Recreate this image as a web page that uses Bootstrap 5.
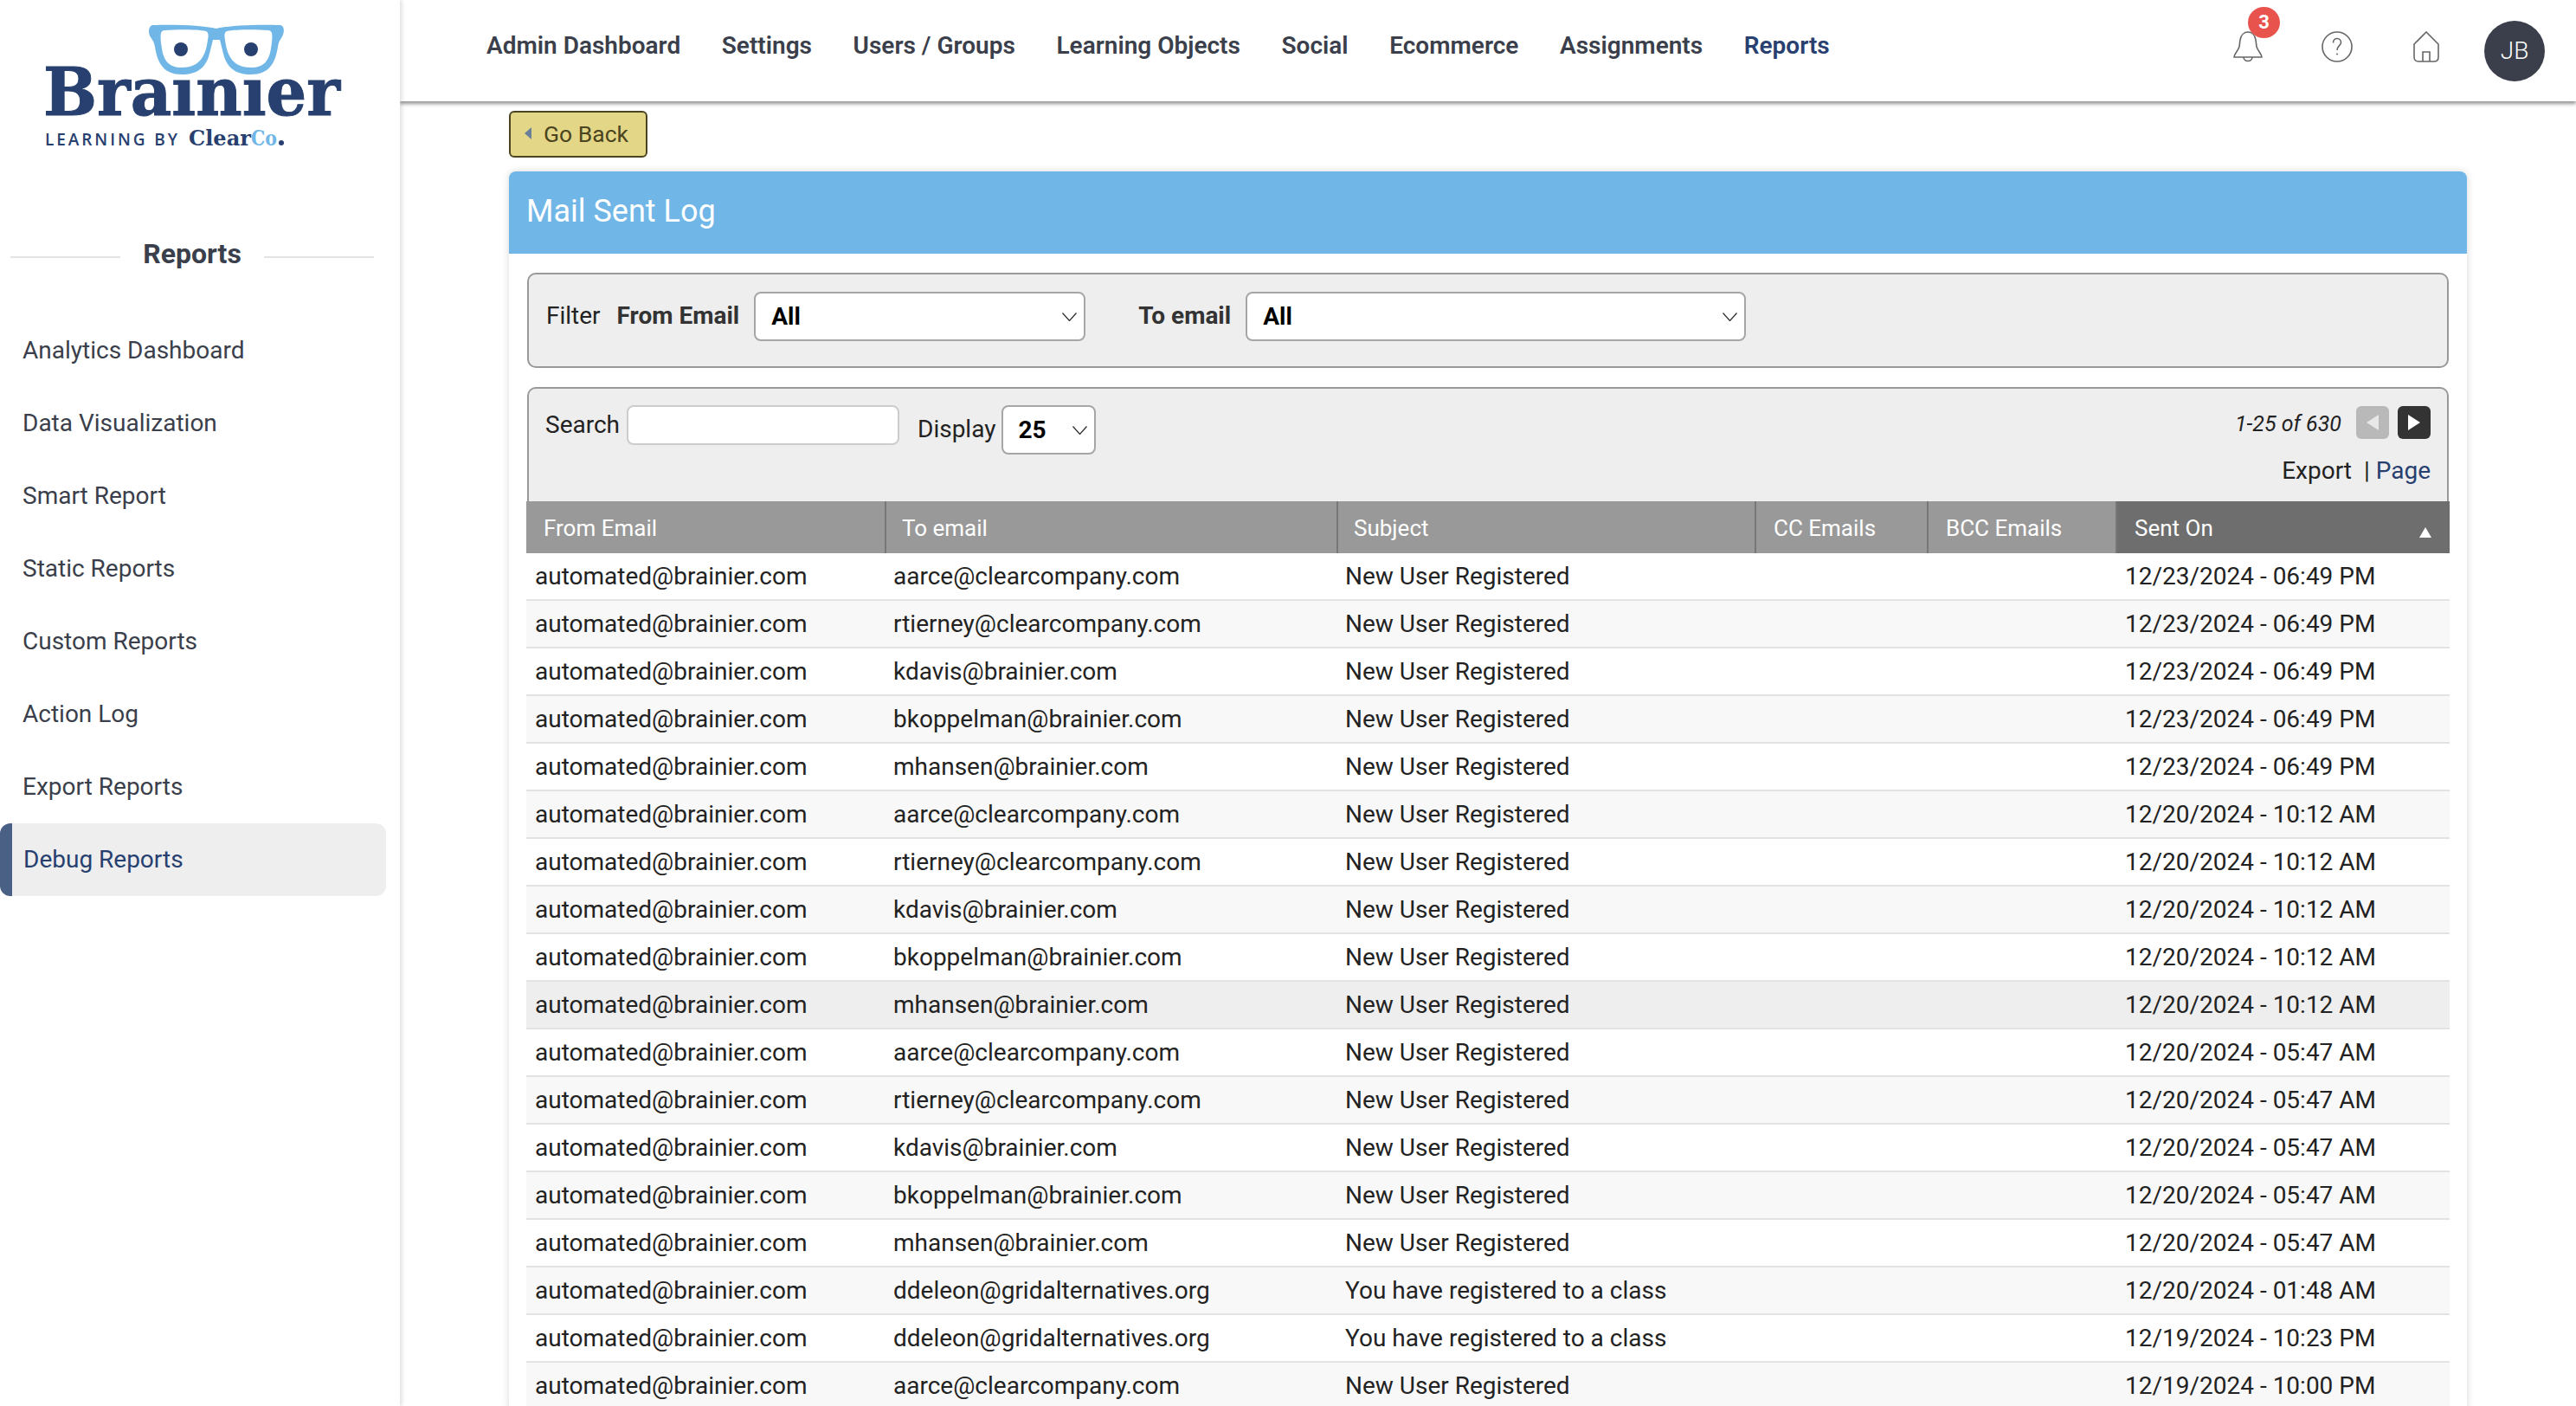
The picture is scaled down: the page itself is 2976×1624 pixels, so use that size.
<!DOCTYPE html>
<html lang="en">
<head>
<meta charset="utf-8">
<title>Mail Sent Log</title>
<link rel="stylesheet" href="https://cdn.jsdelivr.net/npm/bootstrap@5.3.0/dist/css/bootstrap.min.css">
<script src="https://cdn.jsdelivr.net/npm/bootstrap@5.3.0/dist/js/bootstrap.bundle.min.js"></script>
<style>
html,body{height:100%;overflow:hidden;background:#fff;}
body{font-family:Roboto,"Liberation Sans",sans-serif;font-size:28px;color:#222;}
main{min-width:0;}
.page-wrap{height:1624px;}
.side-rail{width:462px;flex:none;background:#fff;box-shadow:2px 0 5px rgba(0,0,0,.14);position:relative;z-index:3;}
.logo-svg{display:block;width:462px;height:200px;}
.rail-title{margin-top:62px;padding:0 30px 0 12px;gap:26px;height:62px;}
.rail-title span{font-size:32px;font-weight:700;color:#3a3f4b;line-height:62px;}
.rail-title i{flex:1;height:2px;background:#e3e3e3;margin-top:8px;}
.rail-menu{margin-top:39px;}
.rail-menu a{display:block;height:84px;line-height:84px;padding-left:26px;color:#3a3f4b;font-size:28px;text-decoration:none;width:446px;}
.rail-menu a.on{background:#eee;color:#27406f;border-left:14px solid #4a6085;padding-left:13px;border-radius:12px;}
.top-bar{height:117px;background:#fff;box-shadow:0 3px 4px rgba(0,0,0,.42);padding-left:100px;padding-right:36px;position:relative;z-index:2;}
.top-links{gap:47.6px;margin-top:-11px;}
.top-links a{color:#3a3f4b;font-size:28px;font-weight:600;text-decoration:none;white-space:nowrap;}
.top-links a.on{color:#27406f;}
.top-tools{position:relative;height:117px;}
.tool-w1{width:102px;}.tool-w2{width:106px;}.tool-w3{width:82px;}
.tool-ico{display:block;margin-top:36px;}
.tool-badge{position:absolute;left:17px;top:8px;width:37px;height:36px;border-radius:50%;background:#e9534d;color:#fff;font-size:22px;font-weight:700;line-height:36px;text-align:center;}
.tool-avatar{width:70px;height:70px;border-radius:50%;background:#3a3f4b;color:#fff;font-size:28px;font-weight:300;line-height:70px;text-align:center;}
.content-pad{padding:11px 126px 0 126px;}
.back-btn{background:#e4d687;border:2px solid #4a4420;border-radius:6px;color:#4a4420;font-size:26.5px;height:54px;width:160px;padding:0 4px 0 0;display:flex;align-items:center;justify-content:center;gap:14px;}
.back-btn:hover{background:#e4d687;color:#4a4420;border-color:#4a4420;}
.back-btn svg{display:block;margin-top:-3px;}
.log-card{margin-top:16px;border:0;border-radius:8px 8px 0 0;box-shadow:0 0 8px rgba(0,0,0,.16);}
.log-head{background:#70b6e7;color:#fff;font-size:36px;height:95px;line-height:92px;padding:0 20px;border:0;border-radius:8px 8px 0 0!important;}
.log-body{padding:22px 21px 0;}
.grey-box{background:#eee;border:2px solid #999;border-radius:10px;}
.filter-box{height:110px;padding:20px 20px 0 20px;align-items:flex-start;}
.fld-label{font-size:28px;line-height:56px;white-space:nowrap;}
.fld-strong{font-weight:700;color:#333;}
.filter-gap{margin-right:19px;}
.to-gap{margin-left:61px;}
.search-line{line-height:46px;}
.display-gap{margin-left:21px;}
.pick{flex:none;height:57px;border:2px solid #a6a6a6;border-radius:8px;font-size:28px;font-weight:700;color:#000;padding:0 0 0 18px;background-image:url("data:image/svg+xml,%3csvg xmlns='http://www.w3.org/2000/svg' viewBox='0 0 17 10'%3e%3cpath fill='none' stroke='%23333' stroke-width='1.3' d='M.5.5l8 9 8-9'/%3e%3c/svg%3e");background-size:17px 10px;background-position:right 8px center;}
.pick-from{width:383px;margin-left:17px;}
.pick-to{width:578px;margin-left:17px;}
.search-box{margin-top:22px;height:132px;padding:19px 19px 0 19px;border-bottom:0;border-radius:10px 10px 0 0;position:relative;}
.search-input{width:315px;height:46px;border:2px solid #ccc;border-radius:8px;background:#fff;margin-left:8px;padding:0 10px;}
.pick-num{width:109px;margin-left:7px;padding-left:17px;}
.pager-col{margin-left:auto;margin-top:-1px;text-align:right;}
.pager-info{font-style:italic;font-size:25px;margin-right:17px;padding-top:4px;}
.pg-btn{width:38px;height:38px;border-radius:6px;display:flex;align-items:center;justify-content:center;}
.pg-off{background:#b9b9b9;margin-right:10px;}
.pg-on{background:#333;}
.pager-links{margin-top:15px;font-size:28px;line-height:40px;}
.pager-links a{color:#27406f;text-decoration:none;}
.mail-tbl.table{width:2222px;margin:0 0 0 -1px;table-layout:fixed;border-collapse:separate;border-spacing:0;max-width:none;}
.mail-tbl.table th{background:#999;color:#fff;font-weight:400;font-size:26px;height:60px;padding:2px 0 0 18px;vertical-align:middle;border:0;border-left:2px solid #777;box-shadow:none;position:relative;}
.mail-tbl.table th:first-child{border-left:0;padding-left:20px;}
.mail-tbl.table th:nth-child(4),.mail-tbl.table th:nth-child(5){padding-left:20px;}
.mail-tbl.table th.sorted{background:#6e6e6e;padding-left:20px;}
.sort-mark{position:absolute;right:21px;top:30px;width:0;height:0;border-left:7px solid transparent;border-right:7px solid transparent;border-bottom:12px solid #fff;}
.mail-tbl.table td{height:55px;padding:1px 0 0 10px;font-size:28px;line-height:36px;color:#222;vertical-align:middle;background:#fff;border:0;border-bottom:2px solid #e3e3e3;box-shadow:none;white-space:nowrap;overflow:hidden;}
.mail-tbl.table td:last-child{padding-left:11px;}
.mail-tbl.table tbody tr:nth-child(even) td{background:#f8f8f8;}
.mail-tbl.table tbody tr.row-hover td{background:#eee;}
.col-a{width:414px;}.col-b{width:522px;}.col-c{width:483px;}.col-d{width:199px;}.col-e{width:218px;}.col-f{width:386px;}
</style>
</head>
<body>
<div class="page-wrap d-flex">
  <aside class="side-rail">
    <svg class="logo-svg" viewBox="0 0 462 200" xmlns="http://www.w3.org/2000/svg" role="img" aria-label="Brainier learning by ClearCo">
      <path fill="#70b6e7" fill-rule="evenodd" d="M176 29C200 28 235 29 250 33C265 29 300 28 324 29C329 30 329 38 325 44C322 48 322 50 321 54C318 74 310 86 290 86C272 86 262 78 258 62L254 46L246 46L242 62C238 78 228 86 210 86C190 86 182 74 179 54C178 48 176 46 174 43C171 38 171 31 176 29ZM190 35C205 34 228 34 238 36C241 37 241 42 240 46C238 60 234 78 210 78C195 78 189 70 187 56C186 50 185 42 186 38C187 36 188 35 190 35ZM310 35C295 34 272 34 262 36C259 37 259 42 260 46C262 60 266 78 290 78C305 78 311 70 313 56C314 50 315 42 314 38C313 36 312 35 310 35Z"/>
      <circle cx="209" cy="57" r="8" fill="#27406f"/>
      <circle cx="290" cy="57" r="8" fill="#27406f"/>
      <text x="50" y="133" font-family="'DejaVu Serif',serif" font-weight="700" font-size="76" fill="#27406f" stroke="#27406f" stroke-width="1" textLength="343" lengthAdjust="spacingAndGlyphs">Braınıer</text>
      <text x="52" y="168" font-family="'Open Sans',sans-serif" font-weight="600" font-size="19" fill="#27406f" textLength="153">LEARNING BY</text>
      <text x="218" y="168" font-family="'DejaVu Serif',serif" font-weight="700" font-size="25" fill="#27406f" textLength="72" lengthAdjust="spacingAndGlyphs">Clear</text>
      <text x="290" y="168" font-family="'DejaVu Serif',serif" font-weight="700" font-size="25" fill="#70b6e7" textLength="30" lengthAdjust="spacingAndGlyphs">Co</text>
      <circle cx="325" cy="165" r="3" fill="#27406f"/>
    </svg>
    <div class="rail-title d-flex align-items-center"><i></i><span>Reports</span><i></i></div>
    <nav class="rail-menu">
      <a href="#">Analytics Dashboard</a>
      <a href="#">Data Visualization</a>
      <a href="#">Smart Report</a>
      <a href="#">Static Reports</a>
      <a href="#">Custom Reports</a>
      <a href="#">Action Log</a>
      <a href="#">Export Reports</a>
      <a href="#" class="on">Debug Reports</a>
    </nav>
  </aside>
  <main class="flex-grow-1 d-flex flex-column">
    <header class="top-bar d-flex align-items-center justify-content-between">
      <nav class="top-links d-flex">
        <a href="#">Admin Dashboard</a>
        <a href="#">Settings</a>
        <a href="#">Users / Groups</a>
        <a href="#">Learning Objects</a>
        <a href="#">Social</a>
        <a href="#">Ecommerce</a>
        <a href="#">Assignments</a>
        <a href="#" class="on">Reports</a>
      </nav>
      <div class="d-flex align-items-center">
        <div class="top-tools d-flex tool-w1">
          <svg class="tool-ico" width="34" height="36" viewBox="0 0 34 36" fill="none" stroke="#666" stroke-width="1.6"><path d="M1 30C1 26 5 24 7 18L8 10C9 4 13 1 17 1C21 1 25 4 26 10L27 18C29 24 33 26 33 30Z"/><path d="M12 30C12 36 22 36 22 30"/></svg>
          <span class="tool-badge">3</span>
        </div>
        <div class="top-tools d-flex tool-w2">
          <svg class="tool-ico" width="36" height="36" viewBox="0 0 36 36" fill="none" stroke="#666" stroke-width="1.6"><circle cx="18" cy="18" r="17"/><path d="M13.5 13.5C13.5 10 16 8.5 18 8.5C20.5 8.5 22.5 10.5 22.5 13C22.5 16.5 18 17 18 22"/><circle cx="18" cy="26.5" r="1" fill="#666" stroke="none"/></svg>
        </div>
        <div class="top-tools d-flex tool-w3">
          <svg class="tool-ico" width="30" height="36" viewBox="0 0 30 36" fill="none" stroke="#666" stroke-width="1.6"><path d="M1 15L15 1L29 15V30Q29 35 24 35H6Q1 35 1 30Z"/><path d="M11 35V24H19V35"/></svg>
        </div>
        <div class="tool-avatar">JB</div>
      </div>
    </header>
    <div class="content-pad flex-grow-1">
      <button type="button" class="btn back-btn">
        <svg width="8" height="14" viewBox="0 0 8 14"><path d="M8 0V14L0 7Z" fill="#6a7f9a"/></svg>
        <span>Go Back</span>
      </button>
      <section class="card log-card">
        <div class="card-header log-head">Mail Sent Log</div>
        <div class="card-body log-body">
          <form class="grey-box filter-box d-flex">
            <span class="fld-label filter-gap">Filter</span>
            <span class="fld-label fld-strong">From Email</span>
            <select class="form-select pick pick-from"><option>All</option></select>
            <span class="fld-label fld-strong to-gap">To email</span>
            <select class="form-select pick pick-to"><option>All</option></select>
          </form>
          <div class="grey-box search-box d-flex">
            <div class="d-flex align-items-start">
              <span class="fld-label search-line">Search</span>
              <input class="search-input" type="text" aria-label="Search">
              <span class="fld-label display-gap">Display</span>
              <select class="form-select pick pick-num"><option>25</option></select>
            </div>
            <div class="pager-col">
              <div class="d-flex align-items-center justify-content-end">
                <span class="pager-info">1-25 of 630</span>
                <span class="pg-btn pg-off"><svg width="14" height="18" viewBox="0 0 14 18"><path d="M14 0V18L0 9Z" fill="#e8e8e8"/></svg></span>
                <span class="pg-btn pg-on"><svg width="14" height="18" viewBox="0 0 14 18"><path d="M0 0V18L14 9Z" fill="#fff"/></svg></span>
              </div>
              <div class="pager-links">Export &nbsp;| <a href="#">Page</a></div>
            </div>
          </div>
          <table class="table mail-tbl">
            <colgroup><col class="col-a"><col class="col-b"><col class="col-c"><col class="col-d"><col class="col-e"><col class="col-f"></colgroup>
            <thead>
              <tr><th>From Email</th><th>To email</th><th>Subject</th><th>CC Emails</th><th>BCC Emails</th><th class="sorted">Sent On<span class="sort-mark"></span></th></tr>
            </thead>
            <tbody>
              <tr><td>automated@brainier.com</td><td>aarce@clearcompany.com</td><td>New User Registered</td><td></td><td></td><td>12/23/2024 - 06:49 PM</td></tr>
              <tr><td>automated@brainier.com</td><td>rtierney@clearcompany.com</td><td>New User Registered</td><td></td><td></td><td>12/23/2024 - 06:49 PM</td></tr>
              <tr><td>automated@brainier.com</td><td>kdavis@brainier.com</td><td>New User Registered</td><td></td><td></td><td>12/23/2024 - 06:49 PM</td></tr>
              <tr><td>automated@brainier.com</td><td>bkoppelman@brainier.com</td><td>New User Registered</td><td></td><td></td><td>12/23/2024 - 06:49 PM</td></tr>
              <tr><td>automated@brainier.com</td><td>mhansen@brainier.com</td><td>New User Registered</td><td></td><td></td><td>12/23/2024 - 06:49 PM</td></tr>
              <tr><td>automated@brainier.com</td><td>aarce@clearcompany.com</td><td>New User Registered</td><td></td><td></td><td>12/20/2024 - 10:12 AM</td></tr>
              <tr><td>automated@brainier.com</td><td>rtierney@clearcompany.com</td><td>New User Registered</td><td></td><td></td><td>12/20/2024 - 10:12 AM</td></tr>
              <tr><td>automated@brainier.com</td><td>kdavis@brainier.com</td><td>New User Registered</td><td></td><td></td><td>12/20/2024 - 10:12 AM</td></tr>
              <tr><td>automated@brainier.com</td><td>bkoppelman@brainier.com</td><td>New User Registered</td><td></td><td></td><td>12/20/2024 - 10:12 AM</td></tr>
              <tr class="row-hover"><td>automated@brainier.com</td><td>mhansen@brainier.com</td><td>New User Registered</td><td></td><td></td><td>12/20/2024 - 10:12 AM</td></tr>
              <tr><td>automated@brainier.com</td><td>aarce@clearcompany.com</td><td>New User Registered</td><td></td><td></td><td>12/20/2024 - 05:47 AM</td></tr>
              <tr><td>automated@brainier.com</td><td>rtierney@clearcompany.com</td><td>New User Registered</td><td></td><td></td><td>12/20/2024 - 05:47 AM</td></tr>
              <tr><td>automated@brainier.com</td><td>kdavis@brainier.com</td><td>New User Registered</td><td></td><td></td><td>12/20/2024 - 05:47 AM</td></tr>
              <tr><td>automated@brainier.com</td><td>bkoppelman@brainier.com</td><td>New User Registered</td><td></td><td></td><td>12/20/2024 - 05:47 AM</td></tr>
              <tr><td>automated@brainier.com</td><td>mhansen@brainier.com</td><td>New User Registered</td><td></td><td></td><td>12/20/2024 - 05:47 AM</td></tr>
              <tr><td>automated@brainier.com</td><td>ddeleon@gridalternatives.org</td><td>You have registered to a class</td><td></td><td></td><td>12/20/2024 - 01:48 AM</td></tr>
              <tr><td>automated@brainier.com</td><td>ddeleon@gridalternatives.org</td><td>You have registered to a class</td><td></td><td></td><td>12/19/2024 - 10:23 PM</td></tr>
              <tr><td>automated@brainier.com</td><td>aarce@clearcompany.com</td><td>New User Registered</td><td></td><td></td><td>12/19/2024 - 10:00 PM</td></tr>
            </tbody>
          </table>
        </div>
      </section>
    </div>
  </main>
</div>
</body>
</html>
